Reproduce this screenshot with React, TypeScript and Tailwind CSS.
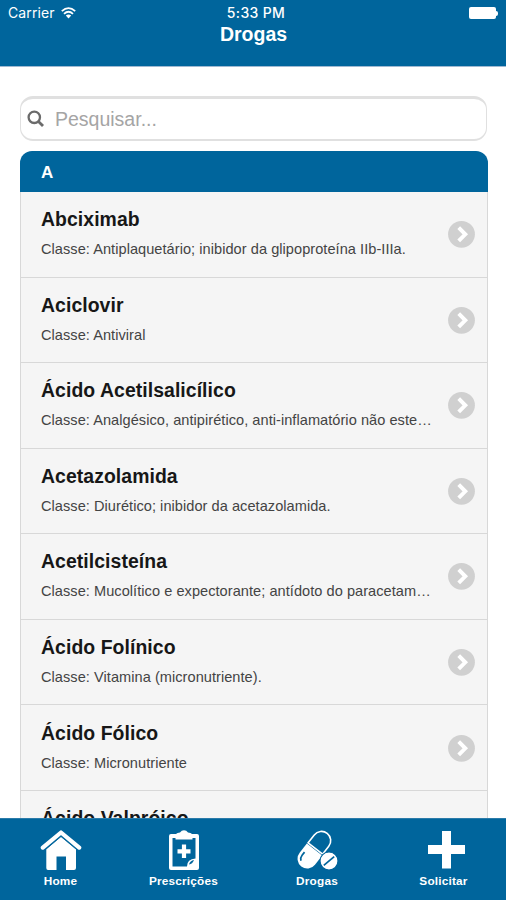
import React from 'react';

const drugs = [
  { name: 'Abciximab', info: 'Classe: Antiplaquetário; inibidor da glipoproteína IIb-IIIa.' },
  { name: 'Aciclovir', info: 'Classe: Antiviral' },
  { name: 'Ácido Acetilsalicílico', info: 'Classe: Analgésico, antipirético, anti-inflamatório não este…' },
  { name: 'Acetazolamida', info: 'Classe: Diurético; inibidor da acetazolamida.' },
  { name: 'Acetilcisteína', info: 'Classe: Mucolítico e expectorante; antídoto do paracetam…' },
  { name: 'Ácido Folínico', info: 'Classe: Vitamina (micronutriente).' },
  { name: 'Ácido Fólico', info: 'Classe: Micronutriente' },
  { name: 'Ácido Valpróico', info: '' },
];

function WifiIcon() {
  return (
    <svg className="ml-[6px] h-[12px] w-[15px]" viewBox="0 0 15 12" fill="none" stroke="white" strokeWidth="1.8">
      <path d="M.8 4.1Q7.5-1.8 14.2 4.1M3 6.8Q7.5 2.8 12 6.8" />
      <path d="M4.8 8.6Q7.5 6.3 10.2 8.6L7.5 11.4Z" fill="white" stroke="none" />
    </svg>
  );
}

function SearchIcon() {
  return (
    <svg className="ml-[6px] h-[18px] w-[18px]" viewBox="0 0 18 18" fill="none" stroke="#6b6b6b">
      <circle cx="7.3" cy="7.3" r="5.7" strokeWidth="2.3" />
      <path d="M11.2 11.2L16 16" strokeWidth="2.8" />
    </svg>
  );
}

function Arrow() {
  return (
    <svg className="h-[28px] w-[28px] shrink-0" viewBox="0 0 28 28">
      <circle cx="13.5" cy="14.3" r="13.4" fill="#d0d0d0" />
      <path d="M10.7 7.7L17.3 14.3L10.7 20.9" fill="none" stroke="white" strokeWidth="3.9" />
    </svg>
  );
}

function HomeIcon() {
  return (
    <svg className="h-[42px] w-[42px]" viewBox="0 0 42 42" fill="white">
      <path d="M2.8 17.6L21 2.5L39.2 17.6" fill="none" stroke="white" strokeWidth="4.2" strokeLinecap="round" strokeLinejoin="round" />
      <path d="M21 6.8L36 19.3V38Q36 40 34 40H26V26.5H16.5V40H8Q6.3 40 6.3 38V19.3Z" />
      <path d="M6 19L21 6.5L36 19" fill="none" stroke="#00659c" strokeWidth="0.8" />
    </svg>
  );
}

function ClipboardIcon() {
  return (
    <svg className="h-[42px] w-[42px]" viewBox="0 0 42 42" fill="white">
      <path fillRule="evenodd" d="M8 4H13Q14 2.8 17 2.6Q18.5 .2 21 .2Q23.500 .2 25 2.6Q28 2.8 29 4H34Q36 4 36 6V38Q36 40 34 40H8Q6 40 6 38V6Q6 4 8 4ZM9.5 8V36.500H24Q24 29 32.500 28.500V8H29.500V9.500H12.500V8Z" />
      <path d="M18.9 14.5H23.1V19.200H27.500V23.400H23.100V28H18.900V23.400H14.500V19.200H18.900Z" />
      <path d="M26 34.500Q27 30.500 31 30Q29.500 34 26 34.500Z" fill="#00659c" />
    </svg>
  );
}

function PillsIcon() {
  return (
    <svg className="h-[42px] w-[42px]" viewBox="0 0 42 42">
      <g transform="translate(1.2 -0.5) rotate(38 17 20)">
        <path d="M8.1 18.500V8.500A9.200 9.200 0 0 1 26.500 8.500V18.500Z" fill="none" stroke="white" strokeWidth="1.6" />
        <path d="M7.500 19.800H27V31.500A9.700 9.700 0 0 1 7.500 31.500Z" fill="white" />
        <path d="M11 28V32Q11 35.500 13.500 37" fill="none" stroke="#00659c" strokeWidth="1.700" />
      </g>
      <circle cx="33" cy="31" r="9" fill="white" stroke="#00659c" strokeWidth="1.200" />
      <path d="M27.800 35.300L38.200 26.700" stroke="#00659c" strokeWidth="1.700" />
    </svg>
  );
}

function PlusIcon() {
  return (
    <svg className="h-[42px] w-[42px]" viewBox="0 0 42 42">
      <path d="M19 1H28V15H42V24H28V38.5H19V24H5V15H19Z" fill="white" />
    </svg>
  );
}

export default function App() {
  return (
    <div className="flex h-[900px] w-[506px] flex-col overflow-hidden bg-white font-['Liberation_Sans',Arial,sans-serif]">
      <header className="h-[67px] shrink-0 border-b border-[#9fb9d2] bg-[#00659c] text-white">
        <div className="grid h-[24px] grid-cols-3 items-center px-2 pt-[2px] font-['Inter',sans-serif] text-[14px] leading-[20px]">
          <div className="flex items-center"><span className="tracking-[0.1px]">Carrier</span><WifiIcon /></div>
          <span className="relative left-[3px] text-center font-medium tracking-[0.35px]">5:33 PM</span>
          <div className="flex items-center justify-end">
            <i className="h-[12px] w-[27px] rounded-[2px] bg-white" />
            <i className="h-[5px] w-[2px] rounded-r-full bg-white" />
          </div>
        </div>
        <h1 className="pl-[1px] text-center text-[19.5px] leading-[20px] font-bold">Drogas</h1>
      </header>

      <main className="flex min-h-0 flex-1 flex-col overflow-hidden px-[20px] pt-[29px]">
        <div className="flex h-[45px] w-[467px] shrink-0 items-center rounded-[13px] border-x-[1.5px] border-t-[3px] border-b-[2px] border-[#e0e0e0] bg-white">
          <SearchIcon />
          <input className="ml-[10px] w-[380px] bg-transparent text-[19.5px] leading-[24px] text-[#777] outline-none placeholder:text-[#a5a5a5]" placeholder="Pesquisar..." />
        </div>
        <section className="mt-[10px] w-[467.5px] shrink-0">
          <h2 className="flex h-[41px] items-center rounded-t-[12px] bg-[#00659c] pt-[2px] pl-[21px] text-[17px] font-bold text-white">A</h2>
          <ul className="border-x-[1.5px] border-[#d8d8d8] bg-[#f5f5f5]">
            {drugs.map((drug) => (
              <li key={drug.name} className="flex h-[85.55px] items-center justify-between border-b border-[#d8d8d8] pr-[11px] pl-[20px]">
                <div className="whitespace-nowrap pb-[2px]">
                  <h3 className="text-[19.4px] leading-[26px] font-bold tracking-[0.07px] text-[#171717]">{drug.name}</h3>
                  <p className="mt-[6px] h-[22px] text-[14.57px] leading-[22px] tracking-[0.05px] text-[#444]">{drug.info}</p>
                </div>
                <Arrow />
              </li>
            ))}
          </ul>
        </section>
      </main>

      <nav className="flex h-[82px] shrink-0 border-t border-[#2b7ba9] bg-[#00659c] text-[11.8px] leading-[14px] font-bold text-white">
        <a className="flex w-[121px] flex-col items-center gap-[2px] pt-[11px]"><HomeIcon /><span className="tracking-[0.2px]">Home</span></a>
        <a className="flex w-[125px] flex-col items-center gap-[2px] pt-[11px]"><ClipboardIcon /><span className="tracking-[0.2px]">Prescrições</span></a>
        <a className="flex w-[142px] flex-col items-center gap-[2px] pt-[11px]"><PillsIcon /><span className="tracking-[0.2px]">Drogas</span></a>
        <a className="flex w-[111px] flex-col items-center gap-[2px] pt-[11px]"><PlusIcon /><span className="tracking-[0.2px]">Solicitar</span></a>
      </nav>
    </div>
  );
}
